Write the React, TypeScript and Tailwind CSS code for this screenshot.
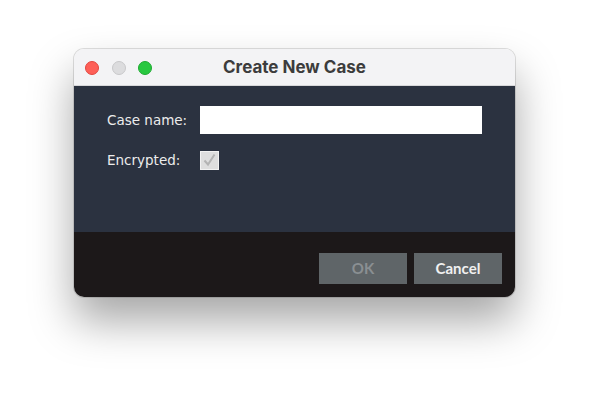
import React from "react";

export default function App() {
  return (
    <div className="w-[590px] h-[396px] bg-white pt-[49px] pl-[74px]">
      <div className="w-[441px] h-[248px] rounded-[10px] overflow-hidden flex flex-col shadow-[0_24px_44px_rgba(0,0,0,0.35),0_0_0_1px_rgba(0,0,0,0.12)]">
        <div className="relative h-[37px] bg-[#f3f3f5] flex items-center justify-center border-b border-[#d8d8da] pt-[2px]">
          <div className="absolute left-[11px] top-[12px] flex gap-[12.5px]">
            <div className="w-[14px] h-[14px] rounded-full bg-[#fe5f57] border border-[#e2463f]" />
            <div className="w-[14px] h-[14px] rounded-full bg-[#dcdcde] border border-[#c8c8ca]" />
            <div className="w-[14px] h-[14px] rounded-full bg-[#28c840] border border-[#1eaa32]" />
          </div>
          <span className="text-[#3c3c3c] text-[17px] font-bold" style={{ fontFamily: "Inter, 'Noto Sans', sans-serif" }}>
            Create New Case
          </span>
        </div>
        <div className="h-[146px] bg-[#2b3240] pt-[20px] pl-[33px] pr-[33px]" style={{ fontFamily: "'DejaVu Sans', sans-serif" }}>
          <div className="flex items-center h-[28px]">
            <span className="w-[93px] text-[13.5px] text-[#ececec]">Case name:</span>
            <div className="flex-1 h-[28px] bg-white" />
          </div>
          <div className="flex items-center h-[20px] mt-[16px]">
            <span className="w-[93px] text-[13.5px] text-[#ececec]">Encrypted:</span>
            <div className="w-[19px] h-[19px] bg-[#dedede] border border-[#f2f2f2] flex items-center justify-center">
              <svg width="15" height="15" viewBox="0 0 15 15">
                <path d="M2.5 7.5 L6 11.5 L12.5 1.5" fill="none" stroke="#b4b4b4" strokeWidth="2" />
              </svg>
            </div>
          </div>
        </div>
        <div className="flex-1 bg-[#1c1819] flex justify-end items-start pt-[21px] pr-[13px] gap-[7px]" style={{ fontFamily: "Lato, 'DejaVu Sans', sans-serif" }}>
          <div className="w-[88px] h-[31px] bg-[#5f6568] flex items-center justify-center text-[15px] font-bold text-[#8a8f92]">OK</div>
          <div className="w-[88px] h-[31px] bg-[#5f6568] flex items-center justify-center text-[15px] font-bold text-[#f0f0f0]">Cancel</div>
        </div>
      </div>
    </div>
  );
}
